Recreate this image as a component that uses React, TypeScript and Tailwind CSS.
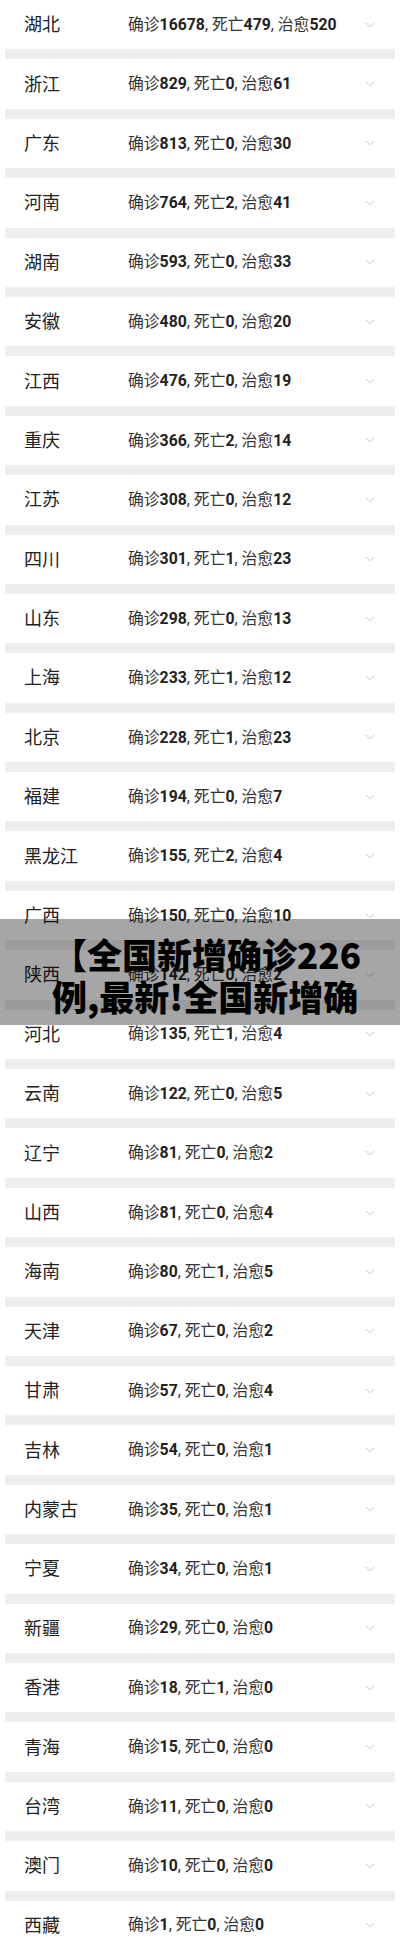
import React from 'react';
import { ChevronDown } from 'lucide-react';

type Region = { name: string; confirmed: number; dead: number; cured: number };

const regions: Region[] = [
  { name: '湖北', confirmed: 16678, dead: 479, cured: 520 },
  { name: '浙江', confirmed: 829, dead: 0, cured: 61 },
  { name: '广东', confirmed: 813, dead: 0, cured: 30 },
  { name: '河南', confirmed: 764, dead: 2, cured: 41 },
  { name: '湖南', confirmed: 593, dead: 0, cured: 33 },
  { name: '安徽', confirmed: 480, dead: 0, cured: 20 },
  { name: '江西', confirmed: 476, dead: 0, cured: 19 },
  { name: '重庆', confirmed: 366, dead: 2, cured: 14 },
  { name: '江苏', confirmed: 308, dead: 0, cured: 12 },
  { name: '四川', confirmed: 301, dead: 1, cured: 23 },
  { name: '山东', confirmed: 298, dead: 0, cured: 13 },
  { name: '上海', confirmed: 233, dead: 1, cured: 12 },
  { name: '北京', confirmed: 228, dead: 1, cured: 23 },
  { name: '福建', confirmed: 194, dead: 0, cured: 7 },
  { name: '黑龙江', confirmed: 155, dead: 2, cured: 4 },
  { name: '广西', confirmed: 150, dead: 0, cured: 10 },
  { name: '陕西', confirmed: 142, dead: 0, cured: 2 },
  { name: '河北', confirmed: 135, dead: 1, cured: 4 },
  { name: '云南', confirmed: 122, dead: 0, cured: 5 },
  { name: '辽宁', confirmed: 81, dead: 0, cured: 2 },
  { name: '山西', confirmed: 81, dead: 0, cured: 4 },
  { name: '海南', confirmed: 80, dead: 1, cured: 5 },
  { name: '天津', confirmed: 67, dead: 0, cured: 2 },
  { name: '甘肃', confirmed: 57, dead: 0, cured: 4 },
  { name: '吉林', confirmed: 54, dead: 0, cured: 1 },
  { name: '内蒙古', confirmed: 35, dead: 0, cured: 1 },
  { name: '宁夏', confirmed: 34, dead: 0, cured: 1 },
  { name: '新疆', confirmed: 29, dead: 0, cured: 0 },
  { name: '香港', confirmed: 18, dead: 1, cured: 0 },
  { name: '青海', confirmed: 15, dead: 0, cured: 0 },
  { name: '台湾', confirmed: 11, dead: 0, cured: 0 },
  { name: '澳门', confirmed: 10, dead: 0, cured: 0 },
  { name: '西藏', confirmed: 1, dead: 0, cured: 0 },
];

const RegionRow: React.FC<{ region: Region }> = ({ region }) => (
  <div className="flex h-[49.4px] items-center bg-white">
    <span className="w-[123px] pl-[19px] text-[18px] text-[#222]">{region.name}</span>
    <span className="flex-1 text-[15.8px] text-[#333]">
      确诊<b className="font-bold text-[#222]">{region.confirmed}</b>, 死亡
      <b className="font-bold text-[#222]">{region.dead}</b>, 治愈
      <b className="font-bold text-[#222]">{region.cured}</b>
    </span>
    <ChevronDown className="mr-[18px] h-[14px] w-[14px] text-[#bbb]" strokeWidth={1.5} />
  </div>
);

export default function App() {
  return (
    <div
      className="relative h-[1951px] w-[400px] overflow-hidden bg-white"
      style={{ fontFamily: 'Roboto, "Noto Sans CJK SC", sans-serif' }}
    >
      <div className="flex flex-col px-[5px]">
        {regions.map((r, i) => (
          <React.Fragment key={r.name}>
            {i > 0 && <div className="h-[10px] bg-[#eeeeee]" />}
            <RegionRow region={r} />
          </React.Fragment>
        ))}
      </div>

      {/* title overlay on the screenshot */}
      <div
        className="absolute left-0 top-[919px] h-[106px] w-full bg-black/35 pl-[52px] pt-[14px] text-left text-[35px] font-black leading-[42px] text-black"
        style={{ fontFamily: '"Noto Sans CJK SC", sans-serif' }}
      >
        <div>【全国新增确诊226</div>
        <div>例,最新!全国新增确</div>
      </div>
    </div>
  );
}
